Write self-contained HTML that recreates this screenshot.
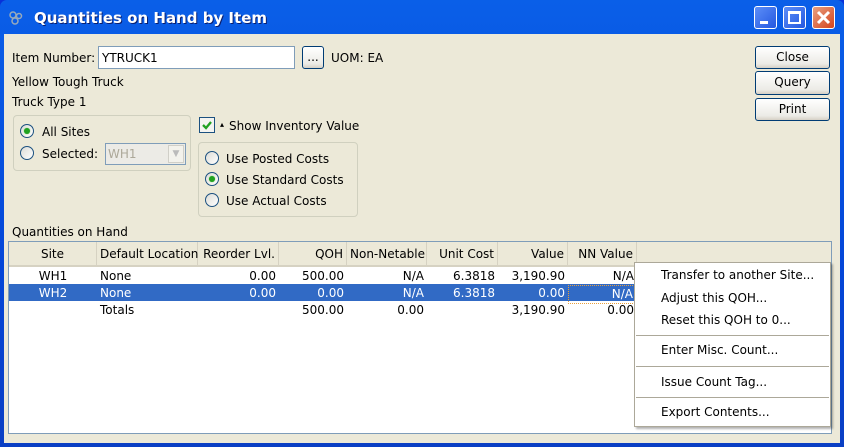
<!DOCTYPE html><html><head><style>
*{box-sizing:border-box}body{margin:0;width:844px;height:447px;overflow:hidden;font-family:Tahoma,"DejaVu Sans","Liberation Sans",sans-serif;font-size:12px;color:#000;background:#0831d9}
.win{position:absolute;left:0;top:0;width:844px;height:447px;background:linear-gradient(#0a5fe8,#0446d8 60%,#0a3fc4);border-radius:7px 7px 0 0}
.body{position:absolute;left:4px;top:34px;width:836px;height:409px;background:#ece9d8}
.a{position:absolute;white-space:nowrap}
.title{left:34px;top:9px;color:#fff;font-weight:bold;font-size:15px;text-shadow:1px 1px #0a1e6e}
.tb{position:absolute;top:6px;width:23px;height:23px;border:1px solid #fff;border-radius:3px;background:linear-gradient(135deg,#5c8ef8,#2458e0)}
.btn{position:absolute;border:1px solid #003c74;border-radius:3px;background:linear-gradient(#fff,#ecebe6 80%,#d6d0c5);text-align:center;line-height:21px}
.radio{position:absolute;width:14px;height:14px;border-radius:50%;border:1px solid #1c5180;background:linear-gradient(135deg,#dcdcd6,#fff)}
.radio.on::after{content:"";position:absolute;left:3px;top:3px;width:6px;height:6px;border-radius:50%;background:#21a121;box-shadow:0 0 1px #4c4}
.grp{position:absolute;border:1px solid #d0d0bf;border-radius:4px}
.hd{position:absolute;top:0;height:25px;line-height:25px;border-right:1px solid #d6d2c2;padding:0 3px}
.c{position:absolute;padding:0 3px}
.r{text-align:right}
.menu{position:absolute;left:634px;top:262px;width:197px;height:165px;background:#fff;border:1px solid #aca899;box-shadow:2px 2px 2px rgba(0,0,0,.3)}
.mi{position:absolute;left:26px}
.sep{position:absolute;left:1px;right:1px;height:1px;background:#aca899}
</style></head><body><div class="win">
<svg class="a" style="left:9px;top:11px" width="14" height="14"><circle cx="4" cy="4" r="3" fill="none" stroke="#9ab" stroke-width="1.5"/><circle cx="10" cy="5" r="2.5" fill="none" stroke="#9ab" stroke-width="1.5"/><circle cx="6" cy="10" r="3" fill="none" stroke="#9ab" stroke-width="1.5"/></svg>
<div class="a title">Quantities on Hand by Item</div>
<div class="tb" style="left:754px"><div style="position:absolute;left:5px;top:14px;width:8px;height:3px;background:#fff"></div></div>
<div class="tb" style="left:783px"><div style="position:absolute;left:4px;top:4px;width:13px;height:13px;border:2px solid #fff;border-top-width:3px"></div></div>
<div class="tb" style="left:812px;background:linear-gradient(135deg,#e8a080,#d5431c)"><svg width="21" height="21"><path d="M5 5L16 16M16 5L5 16" stroke="#fff" stroke-width="3"/></svg></div>
<div class="body"></div>
<div class="a" style="left:12px;top:51px">Item Number:</div>
<div class="a" style="left:98px;top:46px;width:197px;height:23px;border:1px solid #7f9db9;background:#fff;padding:4px 3px">YTRUCK1</div>
<div class="btn" style="left:302px;top:46px;width:22px;height:23px">...</div>
<div class="a" style="left:331px;top:51px">UOM: EA</div>
<div class="btn" style="left:755px;top:46px;width:75px;height:23px">Close</div>
<div class="btn" style="left:755px;top:71px;width:75px;height:24px">Query</div>
<div class="btn" style="left:755px;top:98px;width:75px;height:23px">Print</div>
<div class="a" style="left:12px;top:75px">Yellow Tough Truck</div>
<div class="a" style="left:12px;top:95px">Truck Type 1</div>
<div class="grp" style="left:13px;top:115px;width:178px;height:56px"></div>
<div class="radio on" style="left:20px;top:124px"></div><div class="a" style="left:42px;top:125px">All Sites</div>
<div class="radio" style="left:20px;top:146px"></div><div class="a" style="left:42px;top:147px">Selected:</div>
<div class="a" style="left:105px;top:143px;width:81px;height:22px;border:1px solid #7f9db9;background:#ecebe6;color:#aca899;padding:3px 2px">WH1<div style="position:absolute;right:1px;top:1px;width:16px;height:18px;background:#f3f2ec;border:1px solid #d0cfc8;color:#bbb;font-size:9px;text-align:center;line-height:16px">▼</div></div>
<div class="a" style="left:199px;top:117px;width:16px;height:16px;border:1px solid #1c5180;background:#f4f4f0"><svg width="14" height="14"><path d="M3 7l3 3 5-6" fill="none" stroke="#21a121" stroke-width="2.3"/></svg></div>
<div class="a" style="left:220px;top:120px;font-size:8px">▴</div>
<div class="a" style="left:229px;top:119px">Show Inventory Value</div>
<div class="grp" style="left:198px;top:142px;width:160px;height:75px"></div>
<div class="radio" style="left:205px;top:151px"></div><div class="a" style="left:226px;top:152px">Use Posted Costs</div>
<div class="radio on" style="left:205px;top:172px"></div><div class="a" style="left:226px;top:173px">Use Standard Costs</div>
<div class="radio" style="left:205px;top:193px"></div><div class="a" style="left:226px;top:194px">Use Actual Costs</div>
<div class="a" style="left:12px;top:225px">Quantities on Hand</div>
<div class="a" style="left:8px;top:241px;width:824px;height:193px;border:1px solid #7f9db9;background:#fff">
 <div style="position:absolute;left:0;top:0;width:822px;height:25px;background:#ece9d8;border-bottom:2px solid #d6d2c2"></div>
 <div class="hd" style="left:0;width:88px;text-align:center">Site</div>
 <div class="hd" style="left:88px;width:101px">Default Location</div>
 <div class="hd r" style="left:189px;width:81px">Reorder Lvl.</div>
 <div class="hd r" style="left:270px;width:68px">QOH</div>
 <div class="hd r" style="left:338px;width:80px">Non-Netable</div>
 <div class="hd r" style="left:418px;width:71px">Unit Cost</div>
 <div class="hd r" style="left:489px;width:70px">Value</div>
 <div class="hd r" style="left:559px;width:69px">NN Value</div>
 <div style="position:absolute;left:0;top:42px;width:822px;height:17px;background:#316ac5"></div>
 <div class="a" style="left:0;top:26px;width:822px;line-height:17px">
  <div class="c" style="left:0;width:88px;text-align:center">WH1</div><div class="c" style="left:88px">None</div><div class="c r" style="left:189px;width:81px">0.00</div><div class="c r" style="left:270px;width:68px">500.00</div><div class="c r" style="left:338px;width:80px">N/A</div><div class="c r" style="left:418px;width:71px">6.3818</div><div class="c r" style="left:489px;width:70px">3,190.90</div><div class="c r" style="left:559px;width:69px">N/A</div>
 </div>
 <div class="a" style="left:0;top:43px;width:822px;line-height:17px;color:#fff">
  <div class="c" style="left:0;width:88px;text-align:center">WH2</div><div class="c" style="left:88px">None</div><div class="c r" style="left:189px;width:81px">0.00</div><div class="c r" style="left:270px;width:68px">0.00</div><div class="c r" style="left:338px;width:80px">N/A</div><div class="c r" style="left:418px;width:71px">6.3818</div><div class="c r" style="left:489px;width:70px">0.00</div><div class="c r" style="left:559px;width:69px;border:1px dotted #e8a040">N/A</div>
 </div>
 <div class="a" style="left:0;top:60px;width:822px;line-height:17px">
  <div class="c" style="left:88px">Totals</div><div class="c r" style="left:270px;width:68px">500.00</div><div class="c r" style="left:338px;width:80px">0.00</div><div class="c r" style="left:489px;width:70px">3,190.90</div><div class="c r" style="left:559px;width:69px">0.00</div>
 </div>
</div>
<div class="menu">
 <div class="mi a" style="top:5px">Transfer to another Site...</div>
 <div class="mi a" style="top:28px">Adjust this QOH...</div>
 <div class="mi a" style="top:50px">Reset this QOH to 0...</div>
 <div class="sep" style="top:72px"></div>
 <div class="mi a" style="top:80px">Enter Misc. Count...</div>
 <div class="sep" style="top:103px"></div>
 <div class="mi a" style="top:112px">Issue Count Tag...</div>
 <div class="sep" style="top:134px"></div>
 <div class="mi a" style="top:142px">Export Contents...</div>
</div>
</div></body></html>
